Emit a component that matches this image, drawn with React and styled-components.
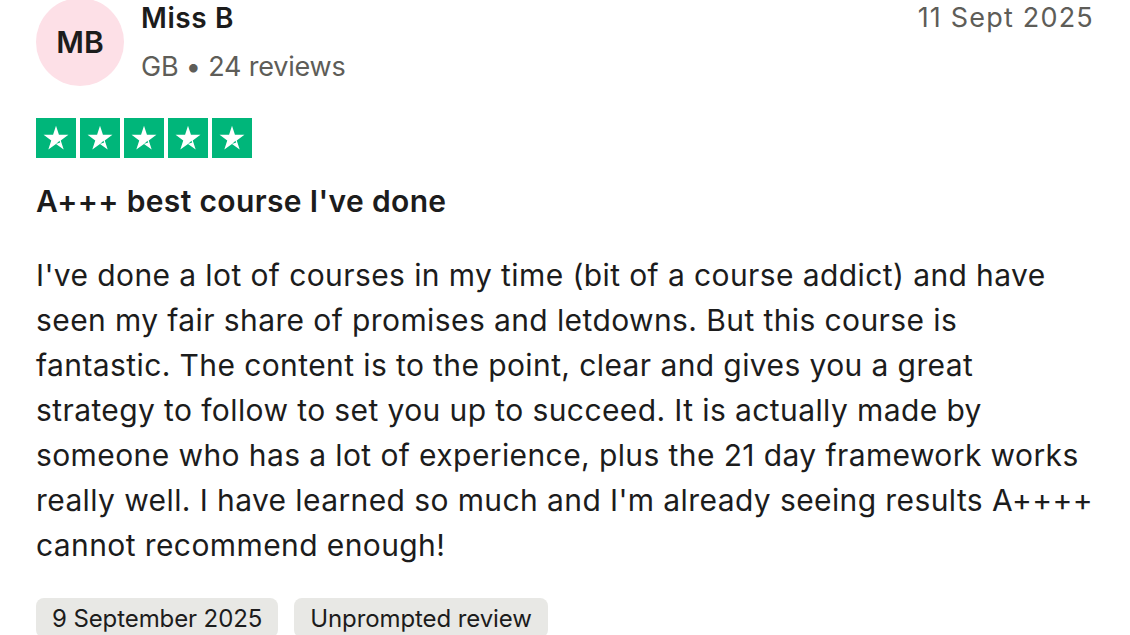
import React from 'react';
import styled, { createGlobalStyle } from 'styled-components';

const Global = createGlobalStyle`
  html, body { margin: 0; padding: 0; background: #fff; }
  body { font-family: Inter, "Liberation Sans", Arial, sans-serif; color: #1c1c1c; }
`;

const Card = styled.article`
  width: 1058px;
  padding: 0 36px;
  display: flex;
  flex-direction: column;
`;

const Header = styled.header`
  display: flex;
  align-items: flex-start;
  gap: 17px;
`;

const Avatar = styled.div`
  width: 88px;
  height: 88px;
  margin-top: -2px;
  border-radius: 50%;
  background: #fde0e7;
  display: flex;
  align-items: center;
  justify-content: center;
  font-size: 30px;
  font-weight: 600;
  color: #1c1c1c;
  flex-shrink: 0;
`;

const Who = styled.div`
  flex: 1;
  display: flex;
  flex-direction: column;
`;

const Name = styled.div`
  font-size: 28px;
  font-weight: 600;
  line-height: 36px;
  letter-spacing: 0.6px;
`;

const Meta = styled.div`
  font-size: 27px;
  line-height: 36px;
  margin-top: 13px;
  color: #5e5d58;
  letter-spacing: -0.2px;
`;

const DateText = styled.time`
  font-size: 27px;
  line-height: 36px;
  color: #5e5d58;
  letter-spacing: 1.2px;
`;

const Stars = styled.div`
  display: flex;
  gap: 4px;
  margin-top: 32px;
`;

const StarBox = styled.span`
  width: 40px;
  height: 40px;
  background: #00b67a;
  display: flex;
  align-items: center;
  justify-content: center;
`;

const Title = styled.h2`
  margin: 25px 0 0;
  font-size: 30px;
  font-weight: 600;
  line-height: 36px;
  letter-spacing: 0.35px;
`;

const Body = styled.p`
  margin: 34px 0 0;
  font-size: 30px;
  line-height: 45px;
  letter-spacing: 0.4px;
  white-space: nowrap;
`;

const Tags = styled.div`
  display: flex;
  gap: 16px;
  margin-top: 30px;
`;

const Tag = styled.span`
  background: #e8e8e5;
  border-radius: 8px;
  padding: 0 16px;
  height: 40px;
  display: flex;
  align-items: center;
  font-size: 24px;
  letter-spacing: -0.1px;
  color: #1c1c1c;
`;

const Star = () => (
  <StarBox>
    <svg width="30" height="30" viewBox="0 0 24 24">
      <path fill="#fff" d="M12 2.2l2.35 7.25h7.6l-6.15 4.45 2.35 7.25L12 16.7l-6.15 4.45 2.35-7.25L2.05 9.45h7.6z" />
      <path fill="#00b67a" d="M12 16.7l3.3-1.05-.45-1.45z" />
    </svg>
  </StarBox>
);

const lines = [
  "I've done a lot of courses in my time (bit of a course addict) and have",
  'seen my fair share of promises and letdowns. But this course is',
  'fantastic. The content is to the point, clear and gives you a great',
  'strategy to follow to set you up to succeed. It is actually made by',
  'someone who has a lot of experience, plus the 21 day framework works',
  "really well. I have learned so much and I'm already seeing results A++++",
  'cannot recommend enough!',
];

export default function App() {
  return (
    <>
      <Global />
      <Card>
        <Header>
          <Avatar>MB</Avatar>
          <Who>
            <Name>Miss B</Name>
            <Meta>GB • 24 reviews</Meta>
          </Who>
          <DateText>11 Sept 2025</DateText>
        </Header>
        <Stars>
          {[0, 1, 2, 3, 4].map((i) => <Star key={i} />)}
        </Stars>
        <Title>A+++ best course I've done</Title>
        <Body>
          {lines.map((l, i) => (
            <React.Fragment key={i}>
              {l}
              {i < lines.length - 1 && <br />}
            </React.Fragment>
          ))}
        </Body>
        <Tags>
          <Tag>9 September 2025</Tag>
          <Tag>Unprompted review</Tag>
        </Tags>
      </Card>
    </>
  );
}
